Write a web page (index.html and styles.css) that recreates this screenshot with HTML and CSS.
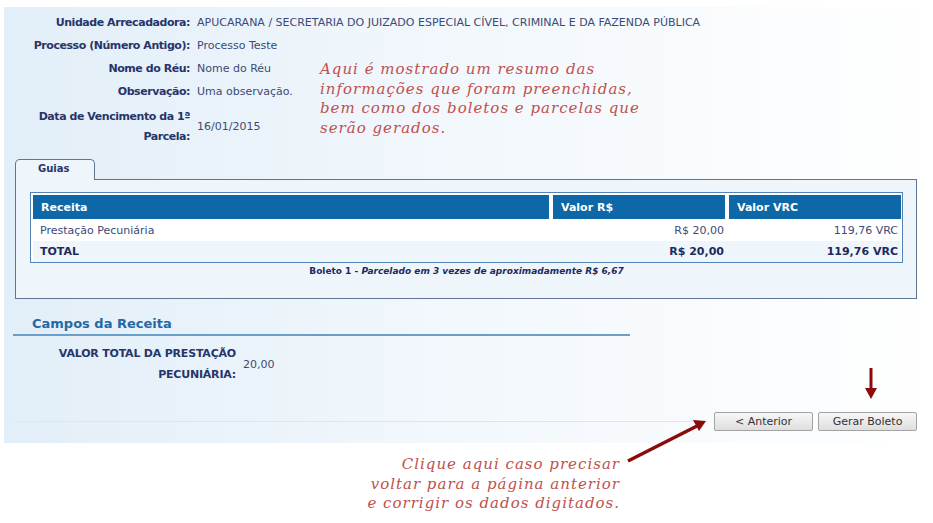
FILE: index.html
```html
<!DOCTYPE html>
<html lang="pt-BR">
<head>
    <meta charset="utf-8">
    <title>Resumo da Guia</title>
    <link rel="stylesheet" href="styles.css">
</head>
<body>
    <div class="panel">
        <div class="details">
            <div class="dlabel">Unidade Arrecadadora:</div>
            <div class="dvalue">APUCARANA / SECRETARIA DO JUIZADO ESPECIAL CÍVEL, CRIMINAL E DA FAZENDA PÚBLICA</div>
            <div class="dlabel">Processo (Número Antigo):</div>
            <div class="dvalue">Processo Teste</div>
            <div class="dlabel">Nome do Réu:</div>
            <div class="dvalue">Nome do Réu</div>
            <div class="dlabel">Observação:</div>
            <div class="dvalue">Uma observação.</div>
            <div class="dlabel two">Data de Vencimento da 1ª Parcela:</div>
            <div class="dvalue">16/01/2015</div>
        </div>

        <div class="tabs">
            <div class="tab">Guias</div>
        </div>
        <div class="tabbox">
            <div class="tablewrap">
                <table class="guias">
                    <tr>
                        <th>Receita</th>
                        <th class="num">Valor R$</th>
                        <th class="num">Valor VRC</th>
                    </tr>
                    <tr class="row">
                        <td>Prestação Pecuniária</td>
                        <td class="right">R$ 20,00</td>
                        <td class="right">119,76 VRC</td>
                    </tr>
                    <tr class="total">
                        <td>TOTAL</td>
                        <td class="right">R$ 20,00</td>
                        <td class="right">119,76 VRC</td>
                    </tr>
                </table>
            </div>
            <div class="boleto">Boleto 1 - <i>Parcelado em 3 vezes de aproximadamente R$ 6,67</i></div>
        </div>

        <h2 class="section">Campos da Receita</h2>
        <div class="fields">
            <div class="flabel">VALOR TOTAL DA PRESTAÇÃO PECUNIÁRIA:</div>
            <div class="fvalue">20,00</div>
        </div>

        <div class="footer">
            <div class="rule"></div>
            <button class="btn">&lt; Anterior</button>
            <button class="btn">Gerar Boleto</button>
        </div>
    </div>

    <!-- anotações do tutorial -->
    <div class="note note-top">Aqui é mostrado um resumo das<br>informações que foram preenchidas,<br>bem como dos boletos e parcelas que<br>serão gerados.</div>
    <div class="note note-bottom">Clique aqui caso precisar<br>voltar para a página anterior<br>e corrigir os dados digitados.</div>
    <svg class="arrows" width="933" height="523" viewBox="0 0 933 523">
        <line x1="871" y1="368" x2="871" y2="390" stroke="#8b0a0a" stroke-width="3"/>
        <polygon points="865,388 877,388 871,399" fill="#8b0a0a"/>
        <line x1="628" y1="461" x2="697" y2="426" stroke="#8b0a0a" stroke-width="3.5"/>
        <polygon points="706,421 699,431 693,420" fill="#8b0a0a"/>
    </svg>
</body>
</html>
```

FILE: styles.css
```css
html,
body {
    margin: 0;
    padding: 0;
    background: #ffffff;
    font-family: "DejaVu Sans", Verdana, sans-serif;
    font-size: 11px;
    color: #3b4a78;
}

.panel {
    margin: 7px 0 0 4px;
    height: 436px;
    padding-top: 4px;
    box-sizing: border-box;
    background: linear-gradient(to right, #e2eef8 0%, #f1f7fc 45%, #ffffff 100%);
}

/* resumo */
.details {
    display: grid;
    grid-template-columns: 186px 1fr;
    column-gap: 7px;
    grid-auto-rows: 23px;
    align-items: center;
}
.dlabel {
    text-align: right;
    font-weight: bold;
    letter-spacing: -0.45px;
    color: #27356a;
    white-space: nowrap;
}
.dlabel.two {
    white-space: normal;
    line-height: 20px;
    padding-top: 1px;
}
.dvalue {
    white-space: nowrap;
}
.details .two,
.details .two + .dvalue {
    grid-row: span 2;
}

/* abas */
.tabs {
    margin: 10px 16px 0 11px;
    height: 20px;
    display: flex;
}
.tab {
    width: 80px;
    height: 21px;
    box-sizing: border-box;
    border: 1px solid #5f7592;
    border-bottom: none;
    border-radius: 5px 5px 0 0;
    background: #eef6fc;
    font-size: 10px;
    font-weight: bold;
    color: #27356a;
    padding: 3px 0 0 22px;
    position: relative;
    z-index: 1;
    margin-bottom: -1px;
}
.tabbox {
    margin: 0 16px 0 11px;
    border: 1px solid #5f7592;
    background: #eef6fc;
    padding: 12px 13px 0 14px;
    height: 120px;
    box-sizing: border-box;
}
.tablewrap {
    border: 1px solid #5183b4;
    background: #ffffff;
    padding: 2px 1px 0 2px;
}
.guias {
    width: 100%;
    border-collapse: collapse;
}
.guias th {
    background: #0e67a7;
    color: #ffffff;
    text-align: left;
    font-weight: bold;
    height: 24px;
    padding: 0 8px;
}
.guias th.num {
    width: 156px;
    border-left: 4px solid #ffffff;
}
.guias td {
    height: 21px;
    padding: 0 7px;
}
.guias .row td {
    background: #ffffff;
    height: 22px;
}
.guias .total td {
    background: #eef6fc;
    font-weight: bold;
    color: #1e2a5c;
}
.guias .right {
    text-align: right;
    padding-right: 3px;
}
.boleto {
    text-align: center;
    font-size: 9px;
    font-weight: bold;
    color: #1e2a5c;
    margin-top: 3px;
}

/* campos */
.section {
    margin: 17px 0 0 9px;
    width: 598px;
    padding: 0 0 3px 19px;
    border-bottom: 2px solid #6a9fca;
    font-size: 13px;
    color: #2569a4;
}
.fields {
    display: flex;
    margin-top: 7px;
}
.flabel {
    width: 192px;
    margin-left: 40px;
    text-align: right;
    font-weight: bold;
    letter-spacing: -0.2px;
    color: #27356a;
    line-height: 21px;
}
.fvalue {
    margin-left: 7px;
    padding-top: 15px;
}

/* rodapé */
.footer {
    display: flex;
    align-items: center;
    margin: 27px 16px 0 10px;
}
.rule {
    flex: 1;
    height: 1px;
    background: #d7e7f4;
    margin-right: 20px;
}
.btn {
    width: 99px;
    height: 19px;
    margin-left: 5px;
    padding: 0;
    border: 1px solid #a3a3a3;
    border-radius: 2px;
    background: linear-gradient(#f7f7f7, #dedede);
    font-family: "DejaVu Sans", Verdana, sans-serif;
    font-size: 11px;
    color: #333333;
}
.btn:first-of-type {
    margin-left: 0;
}

/* anotações */
.note {
    position: absolute;
    font-family: "DejaVu Serif", serif;
    font-style: italic;
    font-size: 15px;
    line-height: 19.5px;
    letter-spacing: 1px;
    color: #c0504d;
}
.note-top {
    left: 320px;
    top: 60px;
}
.note-bottom {
    right: 313px;
    top: 455px;
    text-align: right;
}
.arrows {
    position: absolute;
    left: 0;
    top: 0;
    pointer-events: none;
}
```
